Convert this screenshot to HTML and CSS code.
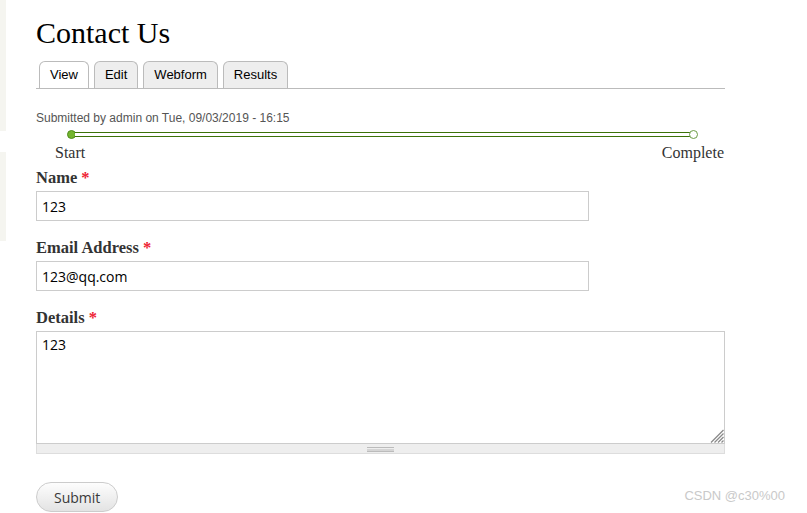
FILE: index.html
```html
<!DOCTYPE html>
<html lang="en">
<head>
<meta charset="utf-8">
<title>Contact Us</title>
<link rel="stylesheet" href="styles.css">
</head>
<body>
<div class="page">
  <aside class="rail">
    <div class="rail-a"></div>
    <div class="rail-b"></div>
  </aside>
  <main class="content">
    <h1 class="title">Contact Us</h1>
    <ul class="tabs">
      <li class="tab active">View</li>
      <li class="tab">Edit</li>
      <li class="tab">Webform</li>
      <li class="tab">Results</li>
    </ul>
    <p class="submitted">Submitted by admin on Tue, 09/03/2019 - 16:15</p>
    <div class="progress">
      <div class="track">
        <span class="dot done"></span>
        <span class="bar"></span>
        <span class="dot"></span>
      </div>
      <div class="steps">
        <span class="step-start">Start</span>
        <span class="step-end">Complete</span>
      </div>
    </div>
    <form class="form">
      <div class="item">
        <label class="label">Name <span class="req">*</span></label>
        <input class="field short" type="text" value="123">
      </div>
      <div class="item">
        <label class="label">Email Address <span class="req">*</span></label>
        <input class="field short" type="text" value="123@qq.com">
      </div>
      <div class="item">
        <label class="label">Details <span class="req">*</span></label>
        <div class="area-wrap">
          <textarea class="area">123</textarea>
          <svg class="handle" width="14" height="14" viewBox="0 0 14 14" aria-hidden="true">
            <g stroke="#8a8a8a" stroke-width="1.2">
              <line x1="13.5" y1="1" x2="1" y2="13.5"/>
              <line x1="13.5" y1="4.5" x2="4.5" y2="13.5"/>
              <line x1="13.5" y1="8" x2="8" y2="13.5"/>
              <line x1="13.5" y1="11.5" x2="11.5" y2="13.5"/>
            </g>
          </svg>
        </div>
        <div class="grippie"><span class="grip"></span></div>
      </div>
      <button class="submit" type="button">Submit</button>
    </form>
  </main>
  <div class="watermark">CSDN @c30%00</div>
</div>
</body>
</html>
```
FILE: styles.css
```css
* { box-sizing: border-box; }
html, body { margin: 0; padding: 0; background: #fff; }
body { font-family: "Liberation Sans", Arial, sans-serif; color: #000; }

.page { position: relative; display: flex; width: 807px; height: 513px; overflow: hidden; }

.rail { width: 6px; flex: none; display: flex; flex-direction: column; }
.rail-a { height: 131px; background: #f5f5f0; }
.rail-b { height: 89px; margin-top: 21px; background: #f5f5f0; }

.content { width: 719px; padding: 15px 0 0 30px; }

.title {
  margin: 0;
  font-family: "Liberation Serif", serif;
  font-weight: normal;
  font-size: 30px;
  line-height: 36px;
  color: #000;
}

.tabs {
  list-style: none;
  margin: 10px 0 0;
  padding: 0 0 0 3px;
  display: flex;
  gap: 5px;
  border-bottom: 1px solid #bbb;
  height: 28px;
}
.tab {
  height: 27px;
  line-height: 26px;
  padding: 0 10px;
  font-size: 13px;
  background: #eee;
  border: 1px solid #bbb;
  border-bottom: none;
  border-radius: 6px 6px 0 0;
  color: #000;
}
.tab.active { background: #fff; }

.submitted {
  margin: 21px 0 0;
  font-size: 12px;
  line-height: 16px;
  color: #555;
}

.progress { margin-top: 4px; }
.track {
  display: flex;
  align-items: center;
  height: 9px;
  margin: 0 27px 0 31px;
}
.dot {
  width: 9px;
  height: 9px;
  flex: none;
  border-radius: 50%;
  border: 1.5px solid #6b9b45;
  background: #fff;
}
.dot.done { background: #74b52f; border-color: #4f8c1c; }
.bar {
  flex: 1;
  height: 5px;
  background: #fff;
  border-top: 1.5px solid #3c7208;
  border-bottom: 1.5px solid #3c7208;
  margin: 0 -1px;
}
.steps {
  display: flex;
  justify-content: space-between;
  margin-top: 4px;
  padding: 0 1px 0 19px;
  font-family: "Liberation Serif", serif;
  font-size: 16px;
  line-height: 20px;
  color: #333;
}

.form { margin-top: 5px; }
.item { margin-bottom: 17px; }
.label {
  display: block;
  margin-bottom: 3px;
  font-family: "Liberation Serif", serif;
  font-weight: bold;
  font-size: 16.5px;
  line-height: 20px;
  color: #333;
}
.req { color: #ee2233; font-weight: bold; }

.field {
  display: block;
  height: 30px;
  padding: 0 5px;
  border: 1px solid #ccc;
  border-radius: 0;
  font-family: "Open Sans", sans-serif;
  font-size: 14px;
  color: #000;
  background: #fff;
  outline: none;
}
.short { width: 553px; }

.area-wrap { position: relative; width: 689px; }
.area {
  display: block;
  width: 689px;
  height: 113px;
  padding: 3px 5px;
  border: 1px solid #ccc;
  font-family: "Open Sans", sans-serif;
  font-size: 14px;
  line-height: 19px;
  color: #000;
  resize: none;
  outline: none;
  margin: 0;
}
.handle { position: absolute; right: 1px; bottom: 1px; }

.grippie {
  width: 689px;
  height: 10px;
  background: #eee;
  border: 1px solid #ddd;
  border-top: none;
  display: flex;
  justify-content: center;
  align-items: center;
}
.grip {
  width: 27px;
  height: 5px;
  border-top: 1px solid #bbb;
  border-bottom: 1px solid #bbb;
  background: linear-gradient(#eee 0 1px, #bbb 1px 2px, #eee 2px);
  background-size: 100% 3px;
  background-position: 0 0.5px;
  margin-top: 1px;
}

.submit {
  display: block;
  margin-top: 28px;
  height: 30px;
  padding: 0 17px;
  border: 1px solid #ccc;
  border-radius: 15px;
  background: linear-gradient(#fdfdfd, #e3e3e3);
  font-family: "Open Sans", sans-serif;
  font-size: 14px;
  color: #3a3a3a;
  cursor: pointer;
}

.watermark {
  position: absolute;
  right: 22px;
  top: 488px;
  font-family: "Liberation Sans", sans-serif;
  font-size: 13px;
  line-height: 16px;
  color: #c9c9c9;
}
```
